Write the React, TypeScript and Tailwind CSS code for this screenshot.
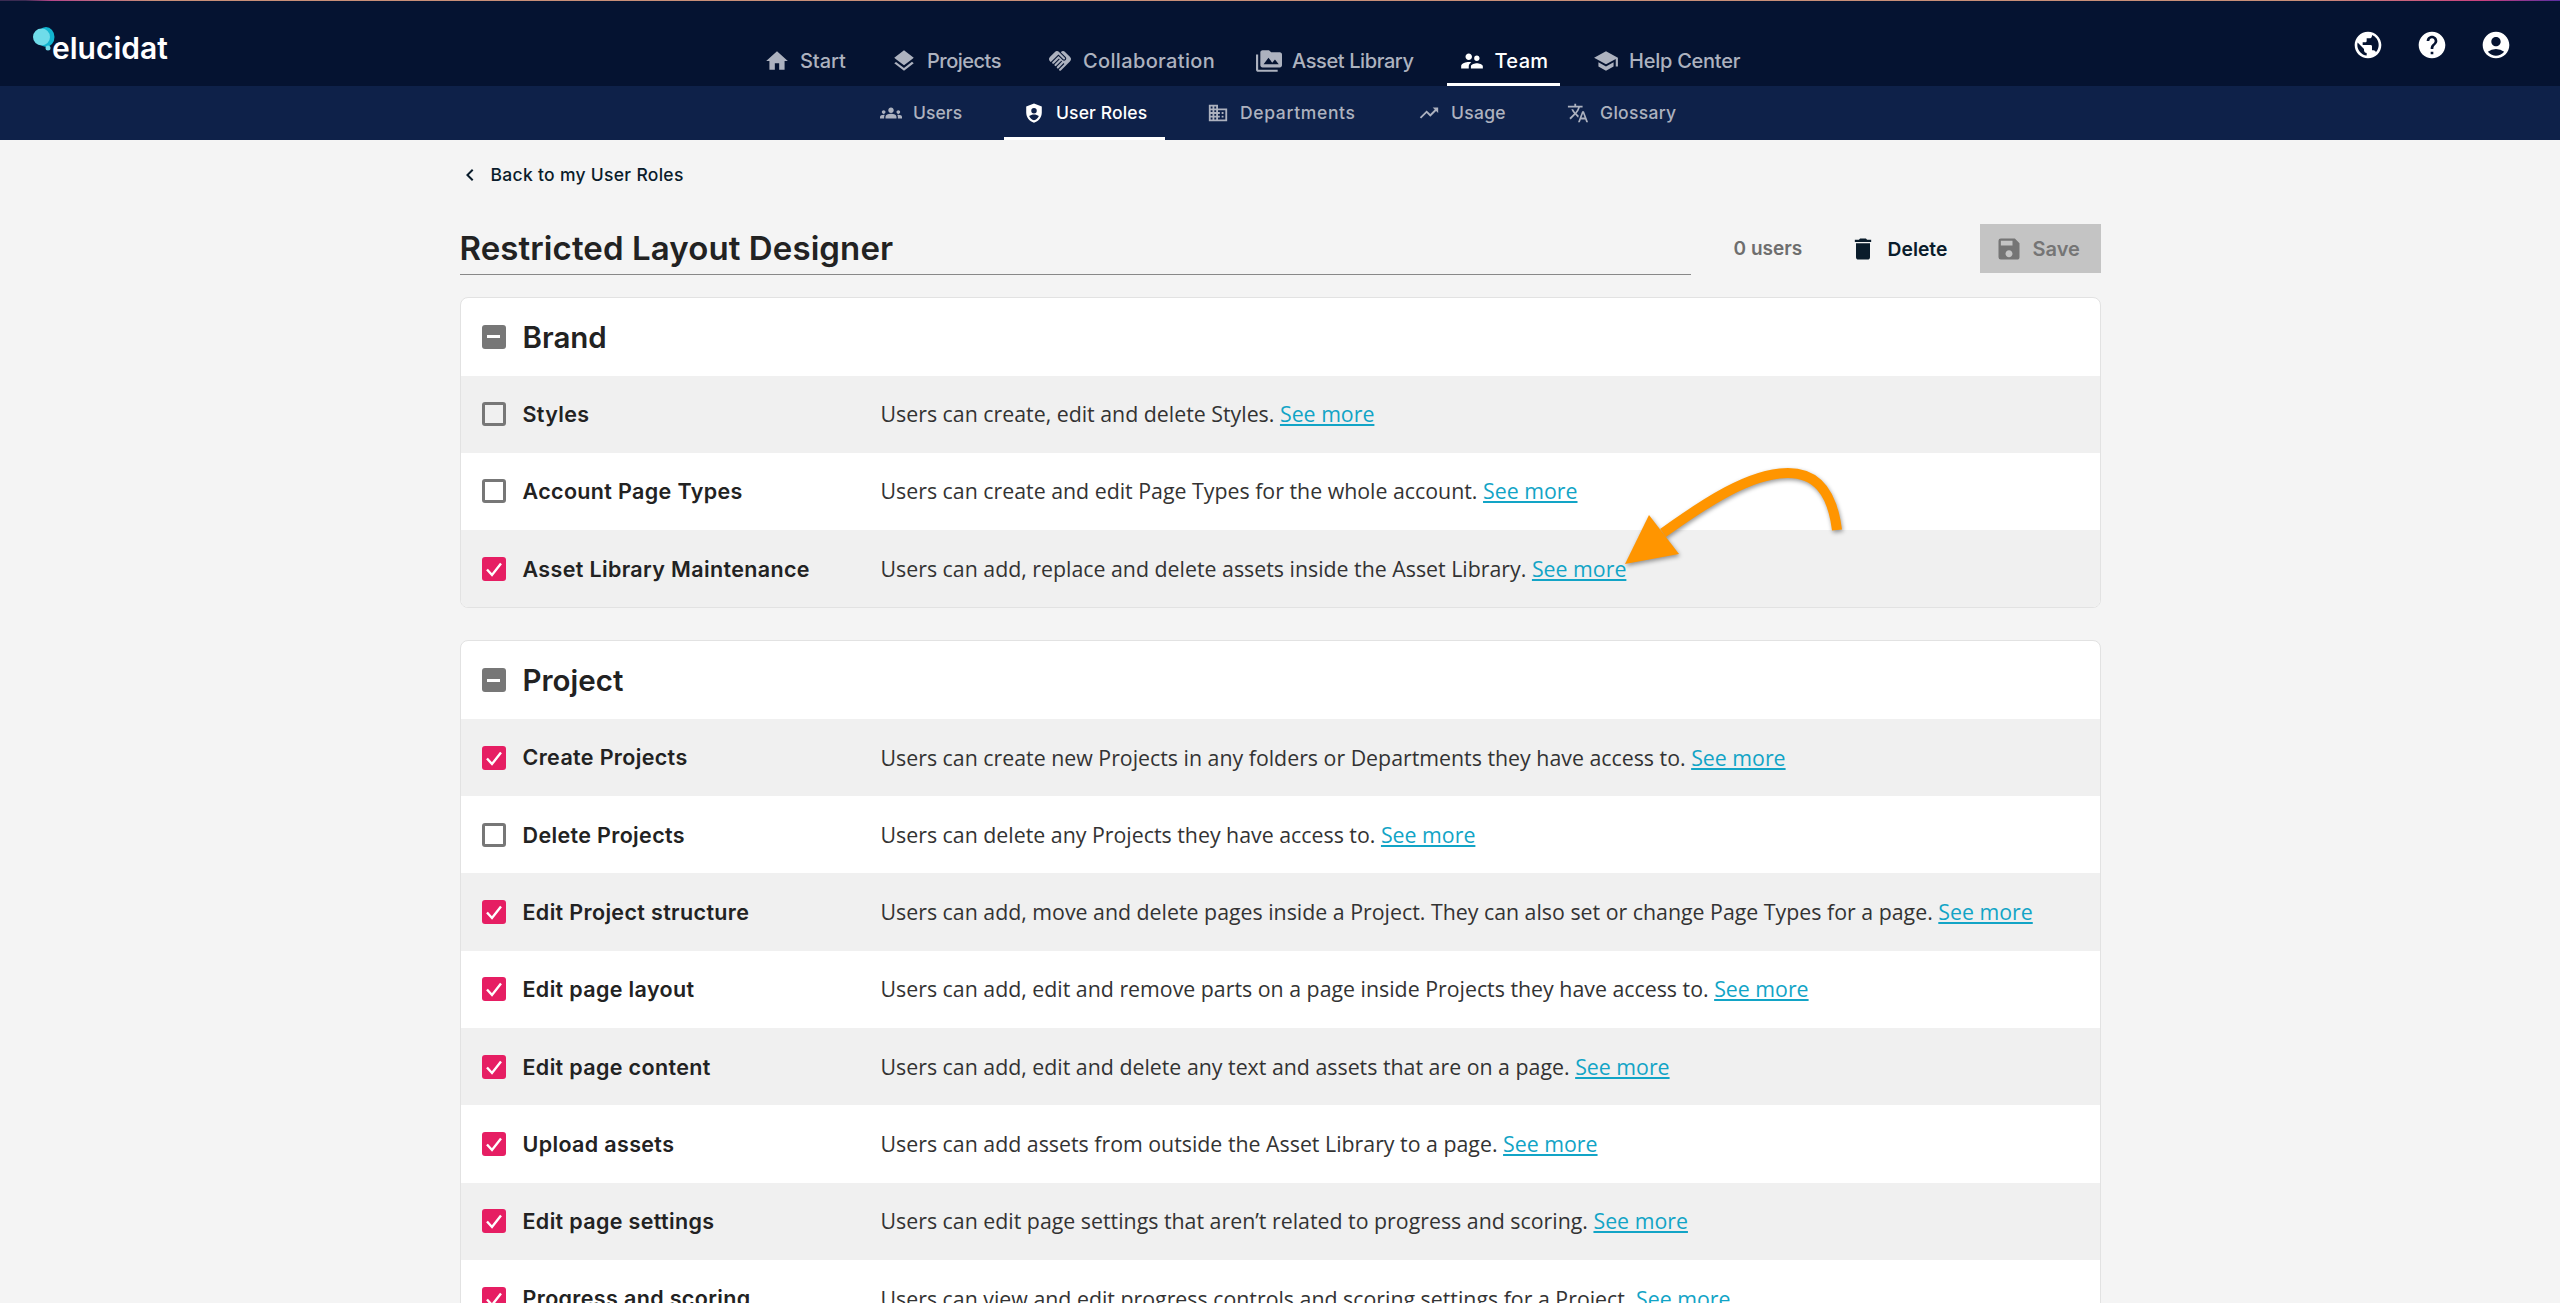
import type { ComponentType } from "react";
import {
  MdAccountCircle,
  MdChevronLeft,
  MdDelete,
  MdGroups,
  MdHandshake,
  MdHelp,
  MdHome,
  MdLayers,
  MdOutlineDomain,
  MdPermMedia,
  MdPublic,
  MdSave,
  MdSchool,
  MdSupervisorAccount,
  MdTranslate,
  MdTrendingUp,
} from "react-icons/md";

type IconType = ComponentType<{ className?: string }>;

function RoleShield({ className }: { className?: string }) {
  return (
    <svg viewBox="0 0 24 24" className={className} fill="currentColor">
      <path
        fillRule="evenodd"
        d="M12 1.500 3.500 5v6.500c0 5.200 3.600 10 8.500 11 4.900-1 8.500-5.800 8.500-11V5L12 1.500zM12 6.500a3 3 0 1 1 0 6 3 3 0 0 1 0-6zM12 20c-2.400-.7-4.300-2.500-5.300-4.700 1.300-1.300 3.300-1.800 5.300-1.800s4 .5 5.300 1.800C16.300 17.500 14.400 19.300 12 20z"
      />
    </svg>
  );
}

const mainNav: { label: string; icon: IconType; active?: boolean; text: string; gap: string }[] = [
  { label: "Start", icon: MdHome, text: "w-[47px] tracking-[-0.05px]", gap: "mr-[20px]" },
  { label: "Projects", icon: MdLayers, text: "w-[76px] tracking-[-0.5px]", gap: "mr-[20px]" },
  { label: "Collaboration", icon: MdHandshake, text: "w-[132px] tracking-[0.35px]", gap: "mr-[17px]" },
  { label: "Asset Library", icon: MdPermMedia, text: "w-[122px] tracking-[-0.4px]", gap: "mr-[20.5px]" },
  { label: "Team", icon: MdSupervisorAccount, active: true, text: "w-[53px] tracking-[0.35px]", gap: "mr-[21.5px]" },
  { label: "Help Center", icon: MdSchool, text: "w-[112px] tracking-[-0.25px]", gap: "" },
];

const subNav: { label: string; icon: IconType; active?: boolean; text: string }[] = [
  { label: "Users", icon: MdGroups, text: "w-[49px] tracking-[0.05px]" },
  { label: "User Roles", icon: RoleShield, active: true, text: "w-[90px] tracking-[0.15px]" },
  { label: "Departments", icon: MdOutlineDomain, text: "w-[117px] tracking-[0.65px]" },
  { label: "Usage", icon: MdTrendingUp, text: "w-[55px] tracking-[0.3px]" },
  { label: "Glossary", icon: MdTranslate, text: "w-[77px] tracking-[0.3px]" },
];

const sections = [
  {
    title: "Brand",
    rows: [
      { name: "Styles", on: false, desc: "Users can create, edit and delete Styles." },
      { name: "Account Page Types", on: false, desc: "Users can create and edit Page Types for the whole account." },
      { name: "Asset Library Maintenance", on: true, desc: "Users can add, replace and delete assets inside the Asset Library." },
    ],
  },
  {
    title: "Project",
    rows: [
      { name: "Create Projects", on: true, desc: "Users can create new Projects in any folders or Departments they have access to." },
      { name: "Delete Projects", on: false, desc: "Users can delete any Projects they have access to." },
      { name: "Edit Project structure", on: true, desc: "Users can add, move and delete pages inside a Project. They can also set or change Page Types for a page." },
      { name: "Edit page layout", on: true, desc: "Users can add, edit and remove parts on a page inside Projects they have access to." },
      { name: "Edit page content", on: true, desc: "Users can add, edit and delete any text and assets that are on a page." },
      { name: "Upload assets", on: true, desc: "Users can add assets from outside the Asset Library to a page." },
      { name: "Edit page settings", on: true, desc: "Users can edit page settings that aren’t related to progress and scoring." },
      { name: "Progress and scoring", on: true, desc: "Users can view and edit progress controls and scoring settings for a Project." },
    ],
  },
];

function Checkbox({ on }: { on: boolean }) {
  if (on) {
    return (
      <span className="size-[24px] shrink-0 rounded-[3px] bg-[#e61e63]">
        <svg viewBox="0 0 24 24" className="size-[24px]" fill="none" stroke="white" strokeWidth="2.4">
          <path d="M5 12.500 10 18 19 6.500" />
        </svg>
      </span>
    );
  }
  return <span className="size-[24px] shrink-0 rounded-[3px] border-[3px] border-[#777777]" />;
}

function Logo() {
  return (
    <div className="flex h-[85px] w-[752px] shrink-0 items-start pl-[33px] pt-[26px]">
      <svg viewBox="0 0 22 24" className="h-[24px] w-[22px] shrink-0">
        <ellipse cx="13" cy="10" rx="8.500" ry="10" fill="#12b5d0" />
        <circle cx="8.500" cy="10" r="8.500" fill="#6fdcea" />
        <circle cx="15" cy="21" r="2.500" fill="#6fdcea" />
      </svg>
      <span className="ml-[-3px] mt-[3px] text-[30px] font-semibold leading-[36px] text-white">elucidat</span>
    </div>
  );
}

function Arrow() {
  return (
    <svg
      viewBox="0 0 230 110"
      className="absolute left-[1620px] top-[462px] h-[110px] w-[230px] drop-shadow-[1px_2px_2px_rgba(0,0,0,0.4)]"
    >
      <path d="M217 68C212 28 195 11 168 11C130 11 85 41 43 71" fill="none" stroke="#ff9500" strokeWidth="10" />
      <path d="M29 53 59 92 5 102Z" fill="#ff9500" />
    </svg>
  );
}

export default function App() {
  return (
    <div className="relative h-[1303px] w-full overflow-hidden bg-[#f4f4f4] font-['Inter',sans-serif]">
      <div className="h-px bg-[linear-gradient(90deg,#3a2b52_0%,#3a2b52_1%,#b6468a_2%,#c98f78_6%,#c98f78_90%,#c8407f_97%,#5a2fa0_100%)]" />
      <header className="flex h-[85px] bg-[#051331]">
        <Logo />
        <nav className="flex h-full items-end">
          {mainNav.map(({ label, icon: Icon, active, text, gap }) => (
            <a
              key={label}
              className={`flex h-[59px] items-center gap-[10px] border-b-[3px] pl-[12px] pr-[12px] pt-[12px] text-[20px] font-medium ${gap} ${
                active ? "border-white text-white" : "border-transparent text-[#adb2bf]"
              }`}
            >
              <Icon className="size-[26px] shrink-0" />
              <span className={`${text} whitespace-nowrap`}>{label}</span>
            </a>
          ))}
        </nav>
        <div className="ml-auto flex items-start gap-[32px] pr-[48px] pt-[28px] text-white">
          <MdPublic className="size-[32px]" />
          <MdHelp className="size-[32px]" />
          <MdAccountCircle className="size-[32px]" />
        </div>
      </header>
      <div className="flex h-[54px] items-stretch gap-[23px] bg-[#0e2149] pl-[861px]">
        {subNav.map(({ label, icon: Icon, active, text }) => (
          <a
            key={label}
            className={`flex items-center gap-[11px] border-b-[3px] px-[19px] pt-[3px] text-[17.5px] font-medium ${
              active ? "border-white text-white" : "border-transparent text-[#adb2bf]"
            }`}
          >
            <Icon className="size-[22px] shrink-0" />
            <span className={`${text} whitespace-nowrap`}>{label}</span>
          </a>
        ))}
      </div>

      <main className="mx-auto w-[1641px]">
        <a className="mb-[14px] ml-[-2px] flex h-[70px] items-center text-[17.5px] font-medium tracking-[0.3px] text-[#0a1c2b]">
          <MdChevronLeft className="size-[24px]" />
          <span className="ml-[9px]">Back to my User Roles</span>
        </a>
        <div className="mb-[22px] flex h-[51px] items-start">
          <h1 className="h-[51px] w-[1232px] border-b border-[#888888] text-[33px] font-semibold leading-[48px] tracking-[0.1px] text-[#222222]">
            Restricted Layout Designer
          </h1>
          <span className="ml-[43px] mt-[13px] w-[68px] whitespace-nowrap text-[19px] font-semibold leading-[24px] text-[#6e6e6e]">
            0 users
          </span>
          <a className="ml-[47px] mt-[11px] flex items-center gap-[11px] text-[19.3px] font-semibold leading-[28px] text-[#0a1c2b]">
            <MdDelete className="size-[28px]" />
            <span className="w-[60px]">Delete</span>
          </a>
          <button className="ml-[32px] flex h-[49px] w-[121px] items-center gap-[10px] bg-[#c4c4c4] pl-[15px] text-[20px] font-semibold text-[#757575]">
            <MdSave className="size-[28px]" />
            Save
          </button>
        </div>

        <div className="flex flex-col gap-[32px]">
          {sections.map((section) => (
            <section key={section.title} className="overflow-hidden rounded-[8px] border border-[#e2e2e2] bg-white">
              <div className="flex h-[77.5px] items-center gap-[17px] pl-[21px]">
                <span className="flex size-[24px] items-center justify-center rounded-[3px] bg-[#777777]">
                  <span className="h-[3px] w-[13px] bg-white" />
                </span>
                <h2 className="text-[29.5px] font-semibold text-[#222222]">{section.title}</h2>
              </div>
              {section.rows.map((row, i) => (
                <div
                  key={row.name}
                  className={`flex h-[77.3px] items-center pl-[21px] ${i % 2 === 0 ? "bg-[#f0f0f0]" : "bg-white"}`}
                >
                  <Checkbox on={row.on} />
                  <span className="ml-[17px] w-[358px] shrink-0 text-[21.5px] font-semibold tracking-[0.35px] text-[#222222]">
                    {row.name}
                  </span>
                  <p className="font-['Open_Sans',sans-serif] text-[21.33px] text-[#333333]">
                    {row.desc} <a className="text-[#12a4c6] underline">See more</a>
                  </p>
                </div>
              ))}
            </section>
          ))}
        </div>
      </main>
      <Arrow />
    </div>
  );
}
